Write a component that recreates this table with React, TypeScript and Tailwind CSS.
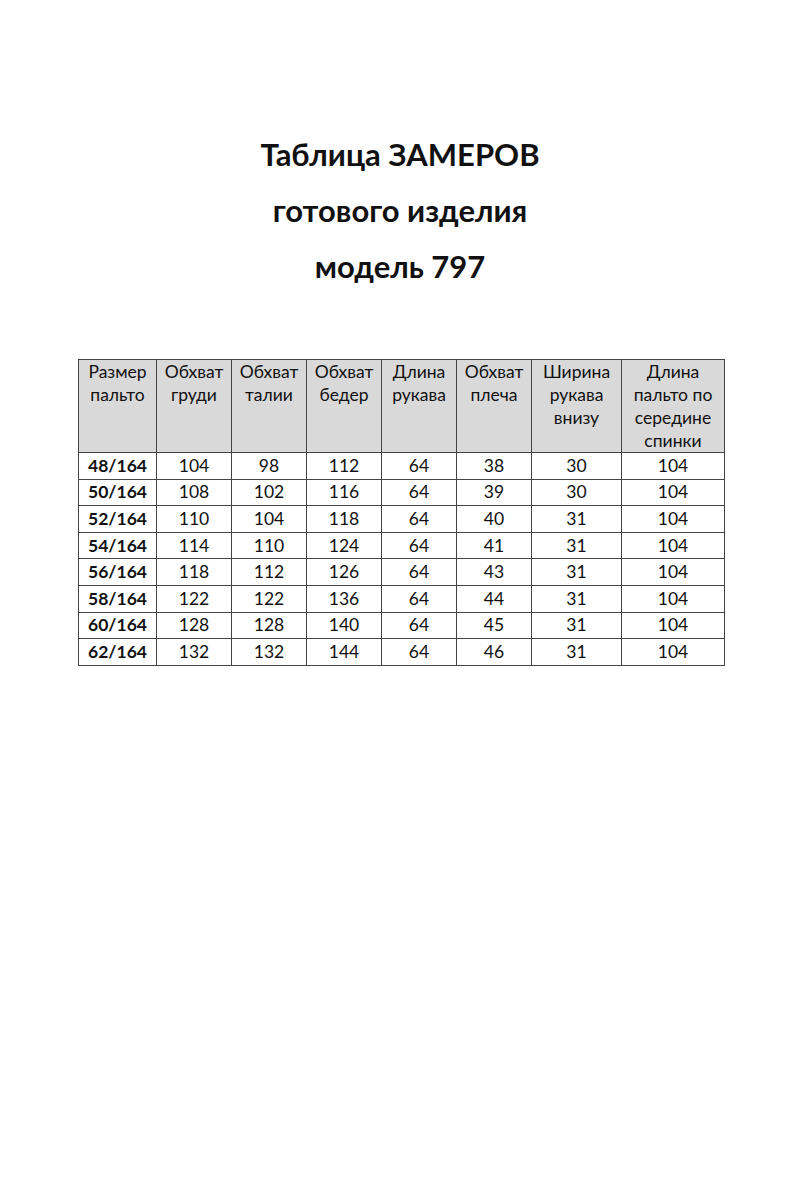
import React from 'react';

const headers = [
  ['Размер', 'пальто'],
  ['Обхват', 'груди'],
  ['Обхват', 'талии'],
  ['Обхват', 'бедер'],
  ['Длина', 'рукава'],
  ['Обхват', 'плеча'],
  ['Ширина', 'рукава', 'внизу'],
  ['Длина', 'пальто по', 'середине', 'спинки'],
];

const widths = ['w-[78px]', 'w-[75px]', 'w-[75px]', 'w-[75px]', 'w-[75px]', 'w-[75px]', 'w-[90px]', 'w-[103px]'];

const rows = [
  ['48/164', '104', '98', '112', '64', '38', '30', '104'],
  ['50/164', '108', '102', '116', '64', '39', '30', '104'],
  ['52/164', '110', '104', '118', '64', '40', '31', '104'],
  ['54/164', '114', '110', '124', '64', '41', '31', '104'],
  ['56/164', '118', '112', '126', '64', '43', '31', '104'],
  ['58/164', '122', '122', '136', '64', '44', '31', '104'],
  ['60/164', '128', '128', '140', '64', '45', '31', '104'],
  ['62/164', '132', '132', '144', '64', '46', '31', '104'],
];

const App: React.FC = () => {
  return (
    <div className="w-[800px] h-[1200px] bg-white text-[#111] font-['Lato','Liberation_Sans',sans-serif]">
      {/* Title */}
      <div className="pt-[126px] flex flex-col items-center font-bold text-[31px] leading-[56px]">
        <h1>Таблица ЗАМЕРОВ</h1>
        <h2>готового изделия</h2>
        <h2>модель 797</h2>
      </div>

      {/* Size table */}
      <div className="pt-[65px] pl-[78px]">
        <table className="border-collapse table-fixed w-[647px] text-[17.5px]">
          <thead>
            <tr className="h-[92px] bg-[#d9d9d9]">
              {headers.map((h, i) => (
                <th
                  key={i}
                  className={`${widths[i]} border border-[#444] align-top font-normal p-0 leading-[23px] text-center`}
                >
                  {h.map((line) => (
                    <div key={line}>{line}</div>
                  ))}
                </th>
              ))}
            </tr>
          </thead>
          <tbody>
            {rows.map((r) => (
              <tr key={r[0]} className="h-[26.6px]">
                {r.map((v, i) => (
                  <td
                    key={i}
                    className={`border border-[#444] text-center leading-[20px] p-0 ${i === 0 ? 'font-bold' : ''}`}
                  >
                    {v}
                  </td>
                ))}
              </tr>
            ))}
          </tbody>
        </table>
      </div>
    </div>
  );
};

export default App;
